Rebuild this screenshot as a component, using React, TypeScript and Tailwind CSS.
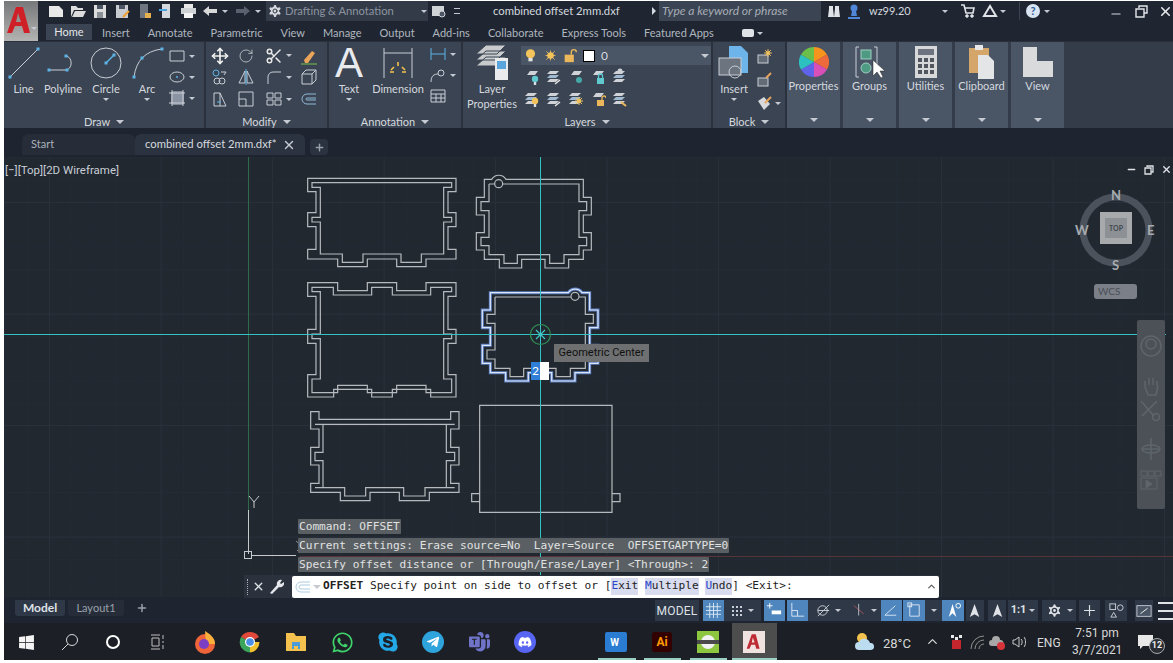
import { ChevronUp, Minus, Move, Plus, RotateCw, Scissors, Settings, X } from 'lucide-react'
import { FaDiscord, FaSkype, FaTelegramPlane, FaWhatsapp, FaWindows } from 'react-icons/fa'
import { BsMicrosoftTeams } from 'react-icons/bs'
import type { ReactNode } from 'react'

const Caret = ({ className = '' }: { className?: string }) => (
  <span className={`inline-block h-0 w-0 border-x-[3px] border-t-[3px] border-x-transparent border-t-[#c5cad2] ${className}`} />
)

function I({ s = 18, v = 18, children }: { s?: number; v?: number; children: ReactNode }) {
  return (
    <svg width={s} height={s} viewBox={`0 0 ${v} ${v}`} fill="none" stroke="#c9ced6" strokeWidth="1">
      {children}
    </svg>
  )
}

const dot = (x: number, y: number) => <rect x={x - 1.5} y={y - 1.5} width="3" height="3" fill="#5cb3e6" stroke="none" />

const Sheet = ({ y = 3 }: { y?: number }) => <path d={`M5 ${y + 4}l3-4h8l-3 4z`} fill="#cfd3d8" stroke="none" />

const Stack = () => (
  <>
    <path d="M3 6l3-3h9l-3 3z" fill="#cfd3d8" stroke="none" />
    <path d="M3 10l3-3h9l-3 3z" fill="#9fb9d0" stroke="none" />
    <path d="M3 14l3-3h9l-3 3z" fill="#cfd3d8" stroke="none" />
  </>
)

const Lock = ({ c, open }: { c: string; open?: boolean }) => (
  <>
    <rect x="9" y="10" width="7" height="6" fill={c} stroke="none" />
    <path d={open ? 'M14 10V8a2 2 0 0 1 4 0' : 'M10.5 10V8a2 2 0 0 1 4 0v2'} stroke={c} strokeWidth="1.3" />
  </>
)

const Bulb = ({ c }: { c: string }) => (
  <>
    <circle cx="13" cy="11" r="3.2" fill={c} stroke="none" />
    <rect x="11.8" y="14" width="2.4" height="3" fill="#d9dde2" stroke="none" />
  </>
)

const Sun = ({ x = 13, y = 11, r = 2.6 }: { x?: number; y?: number; r?: number }) => (
  <>
    <circle cx={x} cy={y} r={r} fill="#f3c45c" stroke="none" />
    <path d={`M${x - r - 2} ${y}h${2 * r + 4}M${x} ${y - r - 2}v${2 * r + 4}M${x - r - 1} ${y - r - 1}l${2 * r + 2} ${2 * r + 2}M${x + r + 1} ${y - r - 1}l${-2 * r - 2} ${2 * r + 2}`} stroke="#f3c45c" />
  </>
)

function Big({ label, w, caret, children }: { label: ReactNode; w: number; caret?: boolean; children: ReactNode }) {
  return (
    <div className="flex flex-col items-center pt-[3px] text-center leading-[15px]" style={{ width: w }}>
      <div className="flex h-[35px] items-center justify-center">{children}</div>
      <div className="mt-[1px]">{label}</div>
      {caret && <Caret className="mt-[2px]" />}
    </div>
  )
}

function Panel({ title, w, children }: { title: string; w: number; children: ReactNode }) {
  return (
    <div className="flex shrink-0 flex-col border-r-2 border-[#2a313d] bg-[#3b4452]" style={{ width: w }}>
      <div className="flex h-[70px] shrink-0 items-start">{children}</div>
      <div className="flex flex-1 items-center justify-center gap-[6px] pt-[2px]">
        {title}
        <Caret className="border-x-[4px] border-t-[4px]" />
      </div>
    </div>
  )
}

function Slide({ label, children }: { label: string; children: ReactNode }) {
  return (
    <div className="mr-[3px] flex w-[53px] shrink-0 flex-col items-center bg-[#4a5566] pt-[3px]">
      <div className="flex h-[33px] items-center">{children}</div>
      <div className="leading-[16px]">{label}</div>
      <Caret className="mt-[24px] border-x-[4px] border-t-[4px]" />
    </div>
  )
}

function Stat({ w, on, mr = 0, children }: { w: number; on?: boolean; mr?: number; children?: ReactNode }) {
  return (
    <div
      className={`flex h-[21px] shrink-0 items-center justify-center ${on ? 'bg-[#4f86bd]' : 'bg-[#2f3846]'}`}
      style={{ width: w, marginRight: mr }}
    >
      {children}
    </div>
  )
}

function App2({ x, children }: { x: number; children: ReactNode }) {
  return (
    <div className="absolute top-[7px] flex h-[24px] w-[24px] -translate-x-1/2 items-center justify-center" style={{ left: x - 4 }}>
      {children}
    </div>
  )
}

const outline = '#b6babe'

const shapes: string[] = [
  // top left
  '53,55 498,55 498,95 474,95 474,158 498,158 498,200 474,200 474,268 498,268 498,297 408,297 408,320 320,320 320,297 232,297 232,320 143,320 143,297 53,297 53,268 78,268 78,200 53,200 53,158 78,158 78,95 53,95',
  '66,68 485,68 485,82 461,82 461,172 485,172 485,186 461,186 461,282 394,282 394,307 333,307 333,282 219,282 219,307 157,307 157,282 91,282 91,186 66,186 66,172 91,172 91,82 66,82',
  // top right inner
  '597,72 614,72 M638,72 867,72 867,125 890,125 890,152 867,152 867,232 890,232 890,257 867,257 867,284 822,284 822,310 779,310 779,284 682,284 682,310 642,310 642,284 597,284 597,257 573,257 573,232 597,232 597,152 573,152 573,125 597,125 597,72',
  // mid left
  '53,368 143,368 143,392 232,392 232,368 320,368 320,392 408,392 408,368 498,368 498,409 474,409 474,508 498,508 498,550 474,550 474,644 498,644 498,711 422,711 422,688 307,688 307,711 245,711 245,688 131,688 131,711 53,711 53,644 78,644 78,550 53,550 53,508 78,508 78,409 53,409',
  '66,382 130,382 130,405 245,405 245,382 307,382 307,405 422,405 422,382 485,382 485,395 461,395 461,522 485,522 485,536 461,536 461,657 485,657 485,698 408,698 408,676 320,676 320,698 232,698 232,676 143,676 143,698 66,698 66,657 91,657 91,536 66,536 66,522 91,522 91,395 66,395',
  // mid right inner
  '615,411 843,411 M867,411 886,411 886,463 910,463 910,490 886,490 886,570 910,570 910,597 886,597 886,625 841,625 841,650 798,650 798,625 701,625 701,650 660,650 660,625 615,625 615,597 591,597 591,570 615,570 615,490 591,490 591,463 615,463 615,411',
]

const toPath = (p: string) =>
  p
    .split(' M')
    .map((seg) => 'M' + seg.replace(/^M/, '').trim().split(' ').join(' L'))
    .join(' ')

const tabs: [string, number][] = [
  ['Insert', 10],
  ['Annotate', 18],
  ['Parametric', 18],
  ['View', 18],
  ['Manage', 18],
  ['Output', 18],
  ['Add-ins', 18],
  ['Collaborate', 18],
  ['Express Tools', 18],
  ['Featured Apps', 18],
]

function Drawing() {
  const vs = Array.from({ length: 54 }, (_, i) => 4 + i * 22.3)
  const hs = Array.from({ length: 20 }, (_, i) => 1 + i * 22.3)
  return (
    <svg className="absolute left-0 top-0" width="1169" height="440" viewBox="0 0 1169 440" fill="none">
      <g transform="translate(-4 -157)">
        {vs.map((v, i) => (
          <path key={v} d={`M${v + 1} 157V597`} stroke={i % 5 === 2 ? '#2a323c' : '#232b34'} />
        ))}
        {hs.map((h, i) => (
          <path key={h} d={`M4 ${157 + h}H1173`} stroke={i % 5 === 2 ? '#2a323c' : '#232b34'} />
        ))}
        <path d="M248.5 157V510" stroke="#2f6b4a" />
        <path d="M300 556.5H1173" stroke="#5a3338" />
        <g transform="translate(290 160) scale(0.33333)" stroke={outline} strokeWidth="3.6">
          {shapes.map((p, i) => (
            <path key={i} d={toPath(p) + (p.includes(' M') ? '' : ' Z')} />
          ))}
          {/* top right outer */}
          <path d="M583,58 L605,58 A25,25 0 0 1 648,58 L880,58 880,112 904,112 904,165 880,165 880,218 904,218 904,270 880,270 880,298 836,298 836,324 765,324 765,298 695,298 695,324 628,324 628,298 583,298 583,270 559,270 559,218 583,218 583,165 559,165 559,112 583,112 Z" />
          <circle cx="626" cy="71" r="12" />
          {/* mid right, selected */}
          <path
            d="M601,398 L835,398 A25,25 0 0 1 876,398 L899,398 899,450 924,450 924,503 899,503 899,556 924,556 924,610 899,610 899,638 855,638 855,663 785,663 785,638 715,638 715,663 647,663 647,638 601,638 601,610 577,610 577,556 601,556 601,503 577,503 577,450 601,450 Z"
            stroke="#6d97e8"
            strokeWidth="9"
            opacity="0.8"
          />
          <path d="M601,398 L835,398 A25,25 0 0 1 876,398 L899,398 899,450 924,450 924,503 899,503 899,556 924,556 924,610 899,610 899,638 855,638 855,663 785,663 785,638 715,638 715,663 647,663 647,638 601,638 601,610 577,610 577,556 601,556 601,503 577,503 577,450 601,450 Z" stroke="#dbe4f7" />
          <circle cx="855" cy="409" r="12" />
        </g>
        <g transform="translate(230 395) scale(0.33333)" stroke={outline} strokeWidth="3.6">
          <path d="M242,50 L267,50 267,73 662,73 662,50 687,50 687,102 662,102 662,157 687,157 687,210 662,210 662,265 687,265 687,292 598,292 598,317 508,317 508,292 420,292 420,317 331,317 331,292 242,292 242,265 267,265 267,210 242,210 242,157 267,157 267,102 242,102 Z" />
          <path d="M255,88 H674 M649,90 L649,172 674,172 674,197 649,197 649,278 585,278 585,303 521,303 521,278 407,278 407,303 344,303 344,278 279,278 279,197 255,197 255,172 279,172 279,90 M255,278 H279 M649,278 H674" />
          <path d="M749,31 H1146 V352 H749 Z M749,296 H725 V320 H749 M1146,296 H1170 V320 H1146" />
        </g>
        {/* crosshair and snap marker */}
        <path d="M540.5 157V597M4 334.5H1166" stroke="#35c2c4" />
        <circle cx="540.5" cy="334.5" r="10" stroke="#2f8f55" strokeWidth="1.2" />
        <path d="M536 330l9 9M545 330l-9 9" stroke="#3fc9c4" strokeWidth="1.2" />
        {/* UCS */}
        <path d="M248.5 510V554M252 555.5H296" stroke="#c6cacd" />
        <rect x="244.5" y="551.5" width="7" height="7" stroke="#c6cacd" />
        <path d="M249 496l5 6 5-6M254 502v6" stroke="#c6cacd" />
        <path d="M296 541l10 9M297 551l9-9" stroke="#8d9196" />
        {/* ViewCube ring */}
        <circle cx="1116" cy="230" r="33" stroke="#4b525c" strokeWidth="7" />
      </g>
    </svg>
  )
}

const cmdLine = 'w-fit h-[15px] rounded-[1px] bg-[#5a5f63] px-[1px] text-[#e0e2e2] leading-[15px] whitespace-pre'

export default function App() {
  return (
    <div className="flex h-[663px] w-[1173px] flex-col overflow-hidden bg-white pb-[3px] pl-[4px] pt-px font-['Lato',sans-serif] text-[11px] text-[#d5d9df]">
      {/* header */}
      <div className="flex h-[40px] shrink-0 bg-[#1f2632]">
        <div className="flex w-[34px] shrink-0 items-center justify-center bg-gradient-to-b from-[#77787a] to-[#b4b4b2]">
          <svg width="28" height="32" viewBox="0 0 28 32">
            <path d="M10 2h7l7 26h-6l-2-7H9l-3 7H1zm2 6l-2 9h5z" fill="#cf2027" fillRule="evenodd" />
          </svg>
          <Caret className="-ml-[3px] mt-[14px]" />
        </div>
        <div className="flex min-w-0 flex-1 flex-col">
          <div className="flex h-[20px] items-center">
            <div className="ml-[9px] flex items-center gap-[4px]">
              <I><path d="M2 4h10l4 4v7H2z" fill="#e8e8e8" stroke="none" /></I>
              <I><path d="M2 4h5l2 2h5v2H5l-3 7zM6 9h11l-3 6H3z" fill="#dcdcdc" stroke="none" /></I>
              <I><path d="M3 3h12v13H3z" fill="#dcdcdc" stroke="none" /><rect x="6" y="3" width="6" height="4" fill="#4a5464" stroke="none" /><rect x="6" y="10" width="6" height="6" fill="#8a8f96" stroke="none" /></I>
              <I><path d="M3 3h12v13H3z" fill="#c8ccd0" stroke="none" /><rect x="6" y="3" width="6" height="4" fill="#4a5464" stroke="none" /><path d="M10 15l6-6" stroke="#f0a030" strokeWidth="2" /></I>
              <I><rect x="5" y="2" width="8" height="14" fill="#6f7680" stroke="none" /><rect x="10" y="11" width="6" height="5" fill="#e5b050" stroke="none" /></I>
              <I><rect x="5" y="2" width="8" height="14" fill="#d5d8dc" stroke="none" /><path d="M2 8h8" stroke="#4aa3e0" strokeWidth="2" /></I>
              <I><rect x="5" y="2" width="9" height="4" fill="#e8e8e8" stroke="none" /><rect x="2" y="6" width="15" height="6" fill="#d0d3d6" stroke="none" /><rect x="5" y="11" width="9" height="5" fill="#f5f5f5" stroke="none" /></I>
            </div>
            <svg className="ml-[5px]" width="16" height="12" viewBox="0 0 16 12"><path d="M1 6l6-5v3h8v4H7v3z" fill="#d8d8d8" /></svg>
            <Caret className="ml-[4px]" />
            <svg className="ml-[7px]" width="16" height="12" viewBox="0 0 16 12"><path d="M15 6L9 1v3H1v4h8v3z" fill="#59616e" /></svg>
            <Caret className="ml-[4px] border-t-[#6f7680]" />
            <div className="ml-[5px] flex h-[20px] w-[162px] items-center bg-[#333b49] pl-[1px]">
              <Settings size={16} fill="#d5d8dc" stroke="#333b49" strokeWidth={1.5} />
              <span className="ml-[2px] whitespace-nowrap text-[11.2px] text-[#8d949f]">Drafting &amp; Annotation</span>
              <Caret className="ml-auto mr-[1px]" />
            </div>
            <svg className="ml-[3px]" width="16" height="16" viewBox="0 0 16 16"><rect x="1" y="3" width="12" height="10" fill="#d0d3d6" /><circle cx="11" cy="11" r="3" fill="#4d5665" stroke="#d0d3d6" /></svg>
            <span className="ml-[7px] h-[6px] w-[6px] border-y border-[#c5cad2]" />
            <span className="ml-[33px] w-[159px] whitespace-nowrap text-[11.3px] text-[#d5d9df]">combined offset 2mm.dxf</span>
            <span className="h-0 w-0 border-y-[4px] border-l-[4px] border-y-transparent border-l-[#d5d9df]" />
            <div className="ml-[3px] flex h-[20px] w-[162px] items-center bg-[#3b4452] pl-[3px] text-[12px] italic text-[#a7adb6]">Type a keyword or phrase</div>
            <svg className="ml-[6px]" width="14" height="14" viewBox="0 0 14 14"><path d="M2 2h4v3l1 8H1l1-8zM8 2h4v3l1 8H7l1-8z" fill="#dfe2e6" /></svg>
            <svg className="ml-[6px]" width="14" height="16" viewBox="0 0 14 16"><circle cx="7" cy="5" r="3.5" fill="#4f86d8" /><path d="M5 8h4l1 5H4zM1 14h12v2H1z" fill="#4f86d8" /></svg>
            <span className="ml-[8px] w-[73px] text-[#d5d9df]">wz99.20</span>
            <Caret className="mr-[12px]" />
            <svg width="16" height="14" viewBox="0 0 16 14" fill="none" stroke="#dfe2e6"><path d="M1 1h3l2 8h7l1-5H5" strokeWidth="1.6" /><circle cx="7" cy="12" r="1.3" fill="#dfe2e6" /><circle cx="12" cy="12" r="1.3" fill="#dfe2e6" /></svg>
            <svg className="ml-[6px]" width="16" height="14" viewBox="0 0 16 14" fill="none" stroke="#dfe2e6" strokeWidth="2"><path d="M8 2L2 12h12z" /></svg>
            <Caret className="ml-[2px]" />
            <span className="ml-[13px] mr-[6px] h-[18px] w-px bg-[#3b4452]" />
            <span className="flex h-[14px] w-[14px] items-center justify-center rounded-full bg-[#d8e4f2] text-[11px] font-bold text-[#2c5c96]">?</span>
            <Caret className="ml-[4px]" />
            <div className="ml-auto flex items-center gap-[12px]">
              <Minus size={14} strokeWidth={2} className="mt-[6px]" />
              <svg width="13" height="13" viewBox="0 0 13 13" fill="none" stroke="#e4e6ea" strokeWidth="1.4"><path d="M4 3V1h8v7h-3M1 4h8v8H1z" /></svg>
              <X size={15} strokeWidth={2.6} className="-ml-[2px] text-[#e4e6ea]" />
            </div>
          </div>
          <div className="flex h-[20px] items-end pb-[1px] text-[#b0b6bf]">
            <div className="ml-[8px] flex h-[16px] w-[46px] items-center justify-center bg-[#3b4452] text-[#e4e6ea]">Home</div>
            {tabs.map(([t, m]) => (
              <span key={t} className="leading-[15px]" style={{ marginLeft: m }}>{t}</span>
            ))}
            <span className="mb-[3px] ml-[28px] h-[8px] w-[12px] rounded-[2px] bg-[#dfe2e6]" />
            <Caret className="mb-[5px] ml-[3px]" />
          </div>
        </div>
      </div>

      {/* ribbon */}
      <div className="flex h-[87px] shrink-0 border-t border-[#2a313d] bg-[#343c49]">
        <Panel title="Draw" w={202}>
          <Big label="Line" w={39}>
            <svg width="34" height="34" viewBox="0 0 34 34" stroke="#c9ced6"><path d="M3 31L31 3" />{dot(3, 31)}{dot(31, 3)}</svg>
          </Big>
          <Big label="Polyline" w={40}>
            <svg width="34" height="34" viewBox="0 0 34 34" fill="none" stroke="#c9ced6"><path d="M3 24h18M21 24a8 8 0 0 0 0-14h-2" />{dot(3, 24)}{dot(21, 24)}{dot(20, 10)}</svg>
          </Big>
          <Big label="Circle" w={46} caret>
            <svg width="34" height="34" viewBox="0 0 34 34" fill="none" stroke="#c9ced6"><circle cx="17" cy="17" r="15" /><path d="M17 17l8-8" stroke="#5cb3e6" strokeWidth="1.5" />{dot(17, 17)}{dot(25, 9)}</svg>
          </Big>
          <Big label="Arc" w={36} caret>
            <svg width="34" height="34" viewBox="0 0 34 34" fill="none" stroke="#c9ced6"><path d="M4 31C6 15 15 5 32 3" />{dot(4, 31)}{dot(12, 12)}{dot(32, 3)}</svg>
          </Big>
          <div className="ml-[3px] flex flex-col gap-[3px] pt-[5px]">
            {[
              <path key="a" d="M2 4h14v10H2z" />,
              <g key="b"><ellipse cx="9" cy="9" rx="7" ry="5" /><circle cx="9" cy="9" r="1" fill="#5cb3e6" stroke="none" /></g>,
              <g key="c"><path d="M4 3h11v12H4z" /><path d="M4 3h11v12H4z" fill="#8a94a3" stroke="none" /><path d="M1 4h16M1 14h16M4 1v16M15 1v16" /></g>,
            ].map((p, i) => (
              <div key={i} className="flex h-[18px] items-center gap-[3px]">
                <I>{p}</I>
                <Caret />
              </div>
            ))}
          </div>
        </Panel>

        <Panel title="Modify" w={123}>
          <div className="grid grid-cols-[27px_26px_38px_24px] grid-rows-[21px_22px_22px] items-center justify-items-center pt-[3px]">
            <Move size={18} color="#f2f2f2" strokeWidth={2.2} />
            <RotateCw size={16} color="#c9ced6" strokeWidth={1.2} />
            <div className="flex items-center gap-[3px]"><Scissors size={18} color="#e8e8e8" /><Caret /></div>
            <I><path d="M4 13l8-9 3 2-7 10H5z" fill="#e9a55a" stroke="none" /><path d="M1 17h16" stroke="#7bc04b" /></I>
            <I><circle cx="5" cy="5" r="3" stroke="#5cb3e6" /><circle cx="6" cy="13" r="3" /><circle cx="11" cy="13" r="3" /><path d="M10 4h5l-2 3" /></I>
            <I><path d="M8 3v12H2zM10 3v12h6z" /><path d="M9 1v16" stroke="#5cb3e6" /></I>
            <div className="flex items-center gap-[3px]"><I><path d="M3 16V9a5 5 0 0 1 5-5h8" /></I><Caret /></div>
            <I><path d="M2 6h10v10H2zM2 6l4-4h10v10l-4 4M12 6l4-4" /></I>
            <I><path d="M3 3h6v13H3zM9 3l6 13H9" /><path d="M6 12h4" stroke="#5cb3e6" /></I>
            <I><path d="M2 2h14v14H2zM2 9h7v7" /></I>
            <div className="flex items-center gap-[3px]"><I><path d="M2 3h6v5H2zM10 3h6v5h-6zM2 10h6v5H2zM10 10h6v5h-6z" /></I><Caret /></div>
            <I><path d="M16 4H7a5 5 0 0 0 0 10h9M16 8H7a1 1 0 0 0 0 2h9" stroke="#8fb9d8" /></I>
          </div>
        </Panel>

        <Panel title="Annotation" w={134}>
          <Big label="Text" w={40} caret>
            <span className="font-['Liberation_Sans',sans-serif] text-[42px] leading-[34px] text-[#e8eaed]">A</span>
          </Big>
          <Big label="Dimension" w={58}>
            <svg width="34" height="34" viewBox="0 0 34 34" fill="none" stroke="#c9ced6"><path d="M3 2v30M31 2v30M3 7h28" /><path d="M10 24l3-3M17 20v-4M24 24l-3-3M9 26h4M21 26h4" stroke="#f2c14e" strokeWidth="1.6" /></svg>
          </Big>
          <div className="flex flex-col items-start gap-[3px] pl-[2px] pt-[3px]">
            <div className="flex h-[18px] items-center gap-[3px]"><I><path d="M2 3v12M16 3v12M2 9h14" stroke="#5cb3e6" /></I><Caret /></div>
            <div className="flex h-[18px] items-center gap-[3px]"><I><path d="M2 16c0-6 3-8 7-8" /><circle cx="12" cy="7" r="3" /></I><Caret /></div>
            <I><path d="M2 3h14v12H2zM2 7h14M2 11h14M7 7v8M12 7v8" /></I>
          </div>
        </Panel>

        <Panel title="Layers" w={250}>
          <Big w={58} label={<>Layer<br />Properties</>}>
            <svg width="36" height="38" viewBox="0 0 36 38"><path d="M2 10L12 1h20l-9 9zM2 16L12 7h20l-9 9zM2 22l10-9h20l-9 9z" fill="#c8cacc" stroke="#3b4452" /><rect x="21" y="14" width="13" height="22" fill="#e9ebed" /><rect x="23" y="17" width="9" height="8" fill="#5aa6dc" /></svg>
          </Big>
          <div className="pt-[4px]">
            <div className="flex h-[19px] w-[190px] items-center gap-[5px] bg-[#4a5566] pl-[2px]">
              <I s={15}><circle cx="9" cy="7" r="5.5" fill="#f3c45c" stroke="none" /><rect x="6.5" y="12" width="5" height="4" fill="#e0e0e0" stroke="none" /></I>
              <I s={15}><Sun x={9} y={9} r={4} /></I>
              <I s={15}><rect x="2" y="8" width="11" height="9" fill="#eab85a" stroke="none" /><path d="M10 8V5a3 3 0 0 1 6 0" stroke="#eab85a" strokeWidth="1.6" /></I>
              <span className="h-[12px] w-[12px] border border-black bg-white" />
              <span className="ml-[1px] text-[12px]">0</span>
              <Caret className="ml-auto mr-[2px] border-x-[4px] border-t-[4px]" />
            </div>
            <div className="mt-[3px] flex flex-col gap-[4px] pl-[1px]">
              <div className="flex gap-[4px]">
                <I><Sheet /><Bulb c="#5fc9cf" /></I>
                <I><Stack /><path d="M11 16l5-4" stroke="#e8e8e8" strokeWidth="1.4" /></I>
                <I><Sheet /><circle cx="13" cy="12" r="3" fill="#44a7a8" stroke="none" /></I>
                <I><Sheet /><Lock c="#5fc9cf" /></I>
                <I><Stack /><circle cx="10" cy="3" r="2.5" fill="#cfd3d8" stroke="none" /></I>
              </div>
              <div className="flex gap-[4px]">
                <I><Stack /><Bulb c="#f3c45c" /></I>
                <I><Stack /><path d="M11 16l5-4" stroke="#e8e8e8" strokeWidth="1.4" /></I>
                <I><Stack /><Sun r={2} /></I>
                <I><Sheet /><Lock c="#eab85a" open /></I>
                <I><Stack /><path d="M11 12l5 4" stroke="#eab85a" strokeWidth="2" /></I>
              </div>
            </div>
          </div>
        </Panel>

        <Panel title="Block" w={74}>
          <Big label="Insert" w={42} caret>
            <svg width="34" height="36" viewBox="0 0 34 36"><path d="M12 1h12l7 7v20H12z" fill="#6db4ea" /><rect x="2" y="13" width="22" height="17" fill="#6c7480" stroke="#c9ced6" /><circle cx="18" cy="27" r="6" fill="none" stroke="#c9ced6" /></svg>
          </Big>
          <div className="flex flex-col gap-[5px] pt-[6px]">
            <I><rect x="3" y="7" width="10" height="8" fill="#636b77" /><Sun x={13} y={5} r={1.8} /></I>
            <I><rect x="3" y="7" width="10" height="8" fill="#636b77" /><path d="M11 7l5-5" stroke="#e9a55a" strokeWidth="2" /></I>
            <div className="flex items-center gap-[2px]"><I><path d="M3 7l6-4 6 7-6 6z" fill="#d6d8db" stroke="none" /><path d="M10 9l6-6" stroke="#e9a55a" strokeWidth="2" /></I><Caret /></div>
          </div>
        </Panel>

        <Slide label="Properties">
          <svg width="30" height="30" viewBox="0 0 30 30">
            <path d="M15 15V0a15 15 0 0 1 13 7.5z" fill="#f7941d" />
            <path d="M15 15l13-7.5a15 15 0 0 1 0 15z" fill="#ef6a3a" />
            <path d="M15 15l13 7.5A15 15 0 0 1 15 30z" fill="#d84fb8" />
            <path d="M15 15v15a15 15 0 0 1-13-7.5z" fill="#5f63e8" />
            <path d="M15 15L2 22.5a15 15 0 0 1 0-15z" fill="#2cc0c0" />
            <path d="M15 15L2 7.5A15 15 0 0 1 15 0z" fill="#6cc04a" />
          </svg>
        </Slide>
        <Slide label="Groups">
          <svg width="30" height="32" viewBox="0 0 30 32" fill="none"><path d="M4 1H1v30h3M19 1h3v22" stroke="#c9ced6" /><rect x="6" y="4" width="10" height="9" fill="#4f9a82" stroke="#9dd0c0" /><circle cx="11" cy="22" r="5" fill="#4f9a82" stroke="#9dd0c0" /><path d="M18 14v16l4-4 4 6 2-1-3-6h5z" fill="#fff" stroke="#222" strokeWidth="0.5" /></svg>
        </Slide>
        <Slide label="Utilities">
          <svg width="22" height="32" viewBox="0 0 22 32"><rect width="22" height="32" fill="#d6d8da" /><rect x="3" y="3" width="16" height="6" fill="#6d7480" /><path d="M3 12h4v4H3zM9 12h4v4H9zM15 12h4v4h-4zM3 18h4v4H3zM9 18h4v4H9zM15 18h4v4h-4zM3 24h4v4H3zM9 24h4v4H9zM15 24h4v4h-4z" fill="#50555e" /></svg>
        </Slide>
        <Slide label="Clipboard">
          <svg width="26" height="34" viewBox="0 0 26 34"><rect y="3" width="20" height="25" fill="#d4a66a" /><rect x="6" y="0" width="8" height="5" fill="#e8e8e8" /><path d="M9 10h10l6 6v18H9z" fill="#e4e5e6" /></svg>
        </Slide>
        <Slide label="View">
          <svg width="30" height="30" viewBox="0 0 30 30"><path d="M0 0h14v14h16v16H0z" fill="#d8dadc" /></svg>
        </Slide>
      </div>

      {/* document tabs */}
      <div className="flex h-[29px] shrink-0 items-end bg-[#1e2530] pb-[2px]">
        <div className="ml-[18px] flex h-[21px] w-[113px] items-center rounded-t-[6px] bg-[#262d39] pl-[9px] text-[#aab0b9]">Start</div>
        <div className="flex h-[21px] w-[170px] items-center rounded-t-[6px] bg-[#2b3340] pl-[10px] text-[#d5d9df]">
          <span className="whitespace-nowrap text-[11.3px]">combined offset 2mm.dxf*</span>
          <X size={14} strokeWidth={2.4} className="ml-[5px] text-[#c5cad2]" />
        </div>
        <div className="ml-[5px] flex h-[16px] w-[18px] items-center justify-center rounded-[4px] bg-[#2b3340]"><Plus size={11} strokeWidth={3} className="text-[#9aa1ab]" /></div>
      </div>

      {/* drawing area */}
      <div className="relative min-h-0 flex-1 bg-[#212830]">
        <Drawing />
        <div className="absolute left-[1px] top-[5px] font-['Roboto',sans-serif] text-[11.5px] text-[#c9ced6]">[−][Top][2D Wireframe]</div>

        <div className="absolute right-[1px] top-[7px] flex items-center gap-[7px]">
          <Minus size={11} strokeWidth={3} className="text-[#dfe2e6]" />
          <svg width="10" height="10" viewBox="0 0 10 10" fill="none" stroke="#dfe2e6" strokeWidth="1.3"><path d="M3 2V1h6v6H7M1 3h6v6H1z" /></svg>
          <X size={11} strokeWidth={3} className="text-[#dfe2e6]" />
        </div>

        {/* view cube */}
        <div className="absolute left-[1096px] top-[55px] flex h-[32px] w-[32px] items-center justify-center bg-[#a7a9ab]">
          <div className="flex h-[20px] w-[22px] items-center justify-center bg-[#8d9196] text-[7px] font-bold text-[#43484f]">TOP</div>
        </div>
        <span className="absolute left-[1107px] top-[29px] text-[13px] font-bold text-[#a7abaf]">N</span>
        <span className="absolute left-[1108px] top-[99px] text-[13px] font-bold text-[#a7abaf]">S</span>
        <span className="absolute left-[1071px] top-[64px] text-[13px] font-bold text-[#a7abaf]">W</span>
        <span className="absolute left-[1143px] top-[64px] text-[13px] font-bold text-[#a7abaf]">E</span>
        <div className="absolute left-[1090px] top-[127px] flex h-[15px] w-[43px] items-center rounded-[3px] bg-[#7a7f88] pl-[4px] text-[10px] text-[#4b4f57]">WCS</div>

        {/* nav bar */}
        <div className="absolute left-[1133px] top-[163px] flex h-[189px] w-[28px] flex-col items-center gap-[3px] rounded-[2px] bg-[#4b5157] pt-[14px]">
          <svg width="22" height="24" viewBox="0 0 22 24" fill="none" stroke="#5f656b" strokeWidth="1.5"><circle cx="11" cy="12" r="10" /><circle cx="11" cy="10" r="5" /></svg>
          <svg className="mt-[14px]" width="22" height="22" viewBox="0 0 22 22" fill="none" stroke="#5f656b" strokeWidth="1.5"><path d="M5 12V6M9 10V3M13 10V3M17 11V6M5 12l3 8h8l2-9" /></svg>
          <svg width="22" height="24" viewBox="0 0 22 24" fill="none" stroke="#5f656b" strokeWidth="1.5"><path d="M1 1l13 15M17 1L2 16" /><circle cx="16" cy="17" r="3.5" /></svg>
          <svg className="mt-[10px]" width="22" height="24" viewBox="0 0 22 24" fill="none" stroke="#5f656b" strokeWidth="1.5"><path d="M11 1v22M3 12h16" /><ellipse cx="11" cy="12" rx="9" ry="4" /></svg>
          <svg className="mt-[6px]" width="22" height="26" viewBox="0 0 22 26" fill="none" stroke="#5f656b"><path d="M1 1h6v5H1zM8 1h6v5H8zM15 1h6v5h-6zM1 8h16v11H1z" /><path d="M6 10l6 4-6 4z" fill="#5f656b" /></svg>
        </div>

        {/* command history */}
        <div className="absolute left-[294px] top-[362px] flex flex-col gap-[4px] font-['DejaVu_Sans_Mono',monospace] text-[11.15px]">
          <div className={cmdLine}>Command: OFFSET</div>
          <div className={cmdLine}>Current settings: Erase source=No  Layer=Source  OFFSETGAPTYPE=0</div>
          <div className={cmdLine}>Specify offset distance or [Through/Erase/Layer] &lt;Through&gt;: 2</div>
        </div>

        {/* command line */}
        <div className="absolute left-[240px] top-[418px] flex h-[23px] w-[695px] items-center bg-[#2b323d] font-['DejaVu_Sans_Mono',monospace] text-[11.15px]">
          <div className="flex w-[48px] shrink-0 items-center gap-[4px] pl-[3px]">
            <span className="h-[16px] border-l border-dotted border-[#aab0b9]" />
            <X size={13} strokeWidth={2.5} className="text-[#dfe2e6]" />
            <svg width="15" height="15" viewBox="0 0 15 15"><path d="M1 14L8 6a4 4 0 0 1 5-5l-2 3 1 1 3-2a4 4 0 0 1-5 5l-7 7z" fill="#e4e6ea" /></svg>
          </div>
          <div className="flex h-[22px] flex-1 items-center rounded-[2px] bg-white whitespace-pre text-[#222]">
            <svg className="ml-[3px]" width="16" height="12" viewBox="0 0 16 12" fill="none" stroke="#aacbe2"><path d="M15 1H6a5 5 0 0 0 0 10h9M15 4H6a2 2 0 0 0 0 4h9" /></svg>
            <Caret className="mx-[2px] border-x-[4px] border-t-[4px] border-t-[#555]" />
            <span className="font-bold">OFFSET</span>
            <span> Specify point on side to offset or [</span>
            <span className="bg-[#d9dcef]"><span className="text-[#2a45c7]">E</span>xit</span>
            <span> </span>
            <span className="bg-[#d9dcef]"><span className="text-[#2a45c7]">M</span>ultiple</span>
            <span> </span>
            <span className="bg-[#d9dcef]"><span className="text-[#2a45c7]">U</span>ndo</span>
            <span>] &lt;Exit&gt;:</span>
            <ChevronUp size={11} strokeWidth={3} className="ml-auto mr-[2px] text-[#666]" />
          </div>
        </div>

        {/* dynamic input and tooltip */}
        <div className="absolute left-[527px] top-[205px] flex h-[18px] w-[18px] items-center bg-white text-[12px]">
          <span className="bg-[#2f7fd8] px-[1px] text-white">2</span>
        </div>
        <div className="absolute left-[550px] top-[187px] flex h-[18px] w-[95px] items-center justify-center bg-[#6d6f70] font-['Roboto',sans-serif] text-[11px] text-[#111]">Geometric Center</div>
      </div>

      {/* status bar */}
      <div className="flex h-[26px] shrink-0 items-start bg-[#1e2530] pt-[3px] text-[#dfe2e6]">
        <div className="ml-[11px] flex h-[16px] w-[50px] items-center justify-center rounded-b-[3px] bg-[#2f3846] text-[12px] font-bold">Model</div>
        <div className="ml-[3px] flex h-[16px] w-[56px] items-center justify-center rounded-b-[3px] bg-[#262d39] text-[#9aa1ab]">Layout1</div>
        <Plus size={12} strokeWidth={3} className="ml-[12px] mt-[2px] text-[#9aa1ab]" />
        <div className="ml-auto flex items-center font-['Roboto',sans-serif]">
          <Stat w={44} mr={4}><span className="text-[12px] tracking-[0.2px]">MODEL</span></Stat>
          <Stat w={21} on mr={0}><I s={17}><path d="M1 5h16M1 9h16M1 13h16M5 1v16M9 1v16M13 1v16" stroke="#d9e6f3" /></I></Stat>
          <Stat w={37} mr={3}>
            <span className="grid grid-cols-3 gap-[2px]">{Array.from({ length: 9 }, (_, i) => <span key={i} className="h-[2px] w-[2px] bg-[#c9ced6]" />)}</span>
            <Caret className="ml-[6px]" />
          </Stat>
          <Stat w={21} on mr={2}><I s={17}><path d="M1 4h6M4 1v6" stroke="#fff" /><rect x="6" y="9" width="10" height="4" fill="#fff" stroke="none" /></I></Stat>
          <Stat w={21} on mr={0}><I s={17}><path d="M3 1v14h13M3 9h6v6" stroke="#d9e6f3" /></I></Stat>
          <Stat w={40} mr={0}><I s={17}><circle cx="8" cy="9" r="5" /><path d="M3 15L15 3M3 9h12" /></I><Caret className="ml-[3px]" /></Stat>
          <Stat w={33} mr={0}><I s={15}><path d="M2 3l12 10" stroke="#b5555a" /><path d="M8 1v14" /></I><Caret className="ml-[4px]" /></Stat>
          <Stat w={21} on mr={1}><I s={17}><path d="M2 14L13 4M2 14h12" stroke="#d9e6f3" /></I></Stat>
          <Stat w={22} on mr={0}><I s={17}><path d="M4 3h10v12H4z" stroke="#d9e6f3" /><rect x="2" y="1" width="4" height="4" stroke="#d9e6f3" /></I></Stat>
          <Stat w={17} mr={0}><Caret /></Stat>
          <Stat w={22} on mr={2}><I s={17}><path d="M8 2L4 16l4-4 4 4z" fill="#fff" stroke="none" /><circle cx="14" cy="4" r="2.5" stroke="#fff" /></I></Stat>
          <Stat w={18} mr={4}><I s={17}><path d="M8 2L3 16l5-3 5 3z" fill="#dfe2e6" stroke="none" /></I></Stat>
          <Stat w={18} mr={2}><I s={17}><path d="M9 2L4 16l5-3 5 3z" fill="#dfe2e6" stroke="none" /></I></Stat>
          <Stat w={30} mr={4}><span className="text-[11px] font-bold">1:1</span><Caret className="ml-[3px]" /></Stat>
          <Stat w={34} mr={3}><Settings size={17} fill="#dfe2e6" stroke="#2f3846" /><Caret className="ml-[4px]" /></Stat>
          <Stat w={21} mr={5}><Plus size={17} strokeWidth={1.6} /></Stat>
          <Stat w={22} mr={8}><I s={17}><rect x="2" y="2" width="6" height="6" /><circle cx="13" cy="6" r="3" /><path d="M6 11l3 5H3z" /></I></Stat>
          <Stat w={18} mr={5}><I s={16}><rect x="1" y="3" width="16" height="12" fill="#4a5566" /><path d="M5 12l8-6" stroke="#fff" /></I></Stat>
          <div className="flex h-[18px] w-[15px] flex-col justify-between"><span className="h-[2px] bg-[#dfe2e6]" /><span className="h-[2px] bg-[#dfe2e6]" /><span className="h-[2px] bg-[#dfe2e6]" /></div>
        </div>
      </div>

      {/* taskbar */}
      <div className="relative h-[37px] shrink-0 bg-[#1c2026] font-['Roboto',sans-serif] text-[#d8d8d8]">
        <App2 x={26}><FaWindows size={17} color="#f4f4f4" /></App2>
        <App2 x={70}><svg width="18" height="18" viewBox="0 0 18 18" fill="none" stroke="#d8d8d8"><circle cx="11" cy="7" r="5.5" /><path d="M7 11l-6 6" /></svg></App2>
        <App2 x={113}><span className="h-[14px] w-[14px] rounded-full border-2 border-white" /></App2>
        <App2 x={157}><svg width="16" height="16" viewBox="0 0 16 16" fill="none" stroke="#bdbdbd"><path d="M2 1h9M2 15h9M3 4h7v8H3zM14 1v4M14 7v2M14 11v4" /></svg></App2>
        <App2 x={205}>
          <svg width="22" height="24" viewBox="0 0 22 24"><circle cx="11" cy="14" r="10" fill="#f0643a" /><path d="M11 1c5 3 10 7 10 13H12z" fill="#fbb03b" /><circle cx="10" cy="14" r="5" fill="#7b3fc4" /></svg>
        </App2>
        <App2 x={250}>
          <svg width="22" height="22" viewBox="0 0 22 22">
            <path d="M11 11L2 6a10.5 10.5 0 0 1 18 0z" fill="#e0483b" />
            <path d="M11 11h9.500A10.500 10.500 0 0 1 11 21.500z" fill="#f2c22e" />
            <path d="M11 11v10.500A10.500 10.500 0 0 1 2 6z" fill="#3ba55c" />
            <circle cx="11" cy="11" r="5" fill="#fff" /><circle cx="11" cy="11" r="3.8" fill="#4a8ee8" />
          </svg>
        </App2>
        <App2 x={296}><svg width="20" height="18" viewBox="0 0 20 18"><path d="M0 0h8l2 3h10v15H0z" fill="#f4c04e" /><rect x="6" y="9" width="8" height="7" fill="#4a9bd8" /><rect x="8" y="13" width="4" height="3" fill="#f4c04e" /></svg></App2>
        <App2 x={342}><FaWhatsapp size={23} color="#3fd36b" /></App2>
        <App2 x={388}><FaSkype size={22} color="#23a8e8" /></App2>
        <App2 x={433}><span className="flex h-[22px] w-[22px] items-center justify-center rounded-full bg-[#2ea3dc]"><FaTelegramPlane size={14} color="#fff" /></span></App2>
        <App2 x={479}><BsMicrosoftTeams size={21} color="#6f74c8" /></App2>
        <App2 x={525}><span className="flex h-[22px] w-[22px] items-center justify-center rounded-full bg-[#5865f2]"><FaDiscord size={14} color="#fff" /></span></App2>

        <div className="absolute left-[594px] bottom-0 h-[2px] w-[38px] bg-[#9ad0c4]" />
        <div className="absolute left-[640px] bottom-0 h-[2px] w-[37px] bg-[#9ad0c4]" />
        <div className="absolute left-[686px] bottom-0 h-[2px] w-[37px] bg-[#9ad0c4]" />
        <div className="absolute left-[728px] top-0 h-[37px] w-[45px] border-b-2 border-[#9ad0c4] bg-[#4d4d4d]" />
        <App2 x={616}><span className="flex h-[20px] w-[22px] items-center justify-end rounded-[2px] bg-[#2b7cd3]"><span className="mr-[8px] text-[10px] font-bold text-white">W</span></span></App2>
        <App2 x={662}><span className="flex h-[20px] w-[20px] items-center justify-center rounded-[3px] bg-[#330000] text-[12px] font-bold text-[#ff9a00]">Ai</span></App2>
        <App2 x={708}><svg width="22" height="22" viewBox="0 0 22 22"><rect width="22" height="22" fill="#8dc63f" /><circle cx="11" cy="11" r="8" fill="#f2f2f2" stroke="#8dc63f" strokeWidth="2" /><rect y="9" width="22" height="4" fill="#4a4a4a" /></svg></App2>
        <App2 x={754}>
          <span className="flex h-[22px] w-[22px] items-center justify-center bg-[#f0e2de]">
            <svg width="16" height="18" viewBox="0 0 28 32"><path d="M10 2h7l7 26h-6l-2-7H9l-3 7H1zm2 6l-2 9h5z" fill="#bd2a33" fillRule="evenodd" /></svg>
          </span>
        </App2>

        <App2 x={865}><svg width="22" height="20" viewBox="0 0 22 20"><circle cx="8" cy="6" r="5" fill="#f2c14e" /><path d="M5 18a4 4 0 0 1 0-8 6 6 0 0 1 11 1 3.500 3.500 0 0 1 1 7z" fill="#bcdcef" /></svg></App2>
        <span className="absolute left-[879px] top-[11px] text-[13px]">28°C</span>
        <ChevronUp size={15} className="absolute left-[921px] top-[11px]" />
        <App2 x={956}><svg width="15" height="16" viewBox="0 0 15 16"><path d="M3 6h9v9H3z" fill="#c4262e" /><path d="M2 1h3v3H2zM10 1h3v3h-3zM6 3h3v3H6z" fill="#e8e8e8" /></svg></App2>
        <App2 x={977}><svg width="15" height="15" viewBox="0 0 15 15" fill="none" stroke="#8e8e8e"><path d="M1 14A13 13 0 0 1 14 1M5 14a9 9 0 0 1 9-9M9 14a5 5 0 0 1 5-5" /></svg></App2>
        <App2 x={997}><svg width="17" height="15" viewBox="0 0 17 15"><path d="M3 11a3 3 0 0 1 0-6 4 4 0 0 1 8 0 3 3 0 0 1 1 6z" fill="#a8a8a8" /><circle cx="12" cy="11" r="4" fill="#d6333a" /></svg></App2>
        <App2 x={1019}><svg width="15" height="14" viewBox="0 0 15 14" fill="none" stroke="#c8c8c8"><path d="M1 5v4h2l4 3V2L3 5zM9 4c1.500 1 1.500 5 0 6M12 2c2 2 2 8 0 10" /></svg></App2>
        <span className="absolute left-[1033px] top-[11px] text-[12px]">ENG</span>
        <div className="absolute left-[1068px] top-[2px] w-[50px] text-center text-[12px] leading-[17px]">7:51 pm<br />3/7/2021</div>
        <App2 x={1146}>
          <svg width="16" height="15" viewBox="0 0 16 15"><path d="M0 0h15v11H5l-3 3v-3H0z" fill="#e8e8e8" /></svg>
        </App2>
        <span className="absolute left-[1145px] top-[15px] flex h-[16px] w-[16px] items-center justify-center rounded-full border border-[#aaa] bg-[#2a2e34] text-[9px] font-bold text-[#ededed]">12</span>
      </div>
    </div>
  )
}
